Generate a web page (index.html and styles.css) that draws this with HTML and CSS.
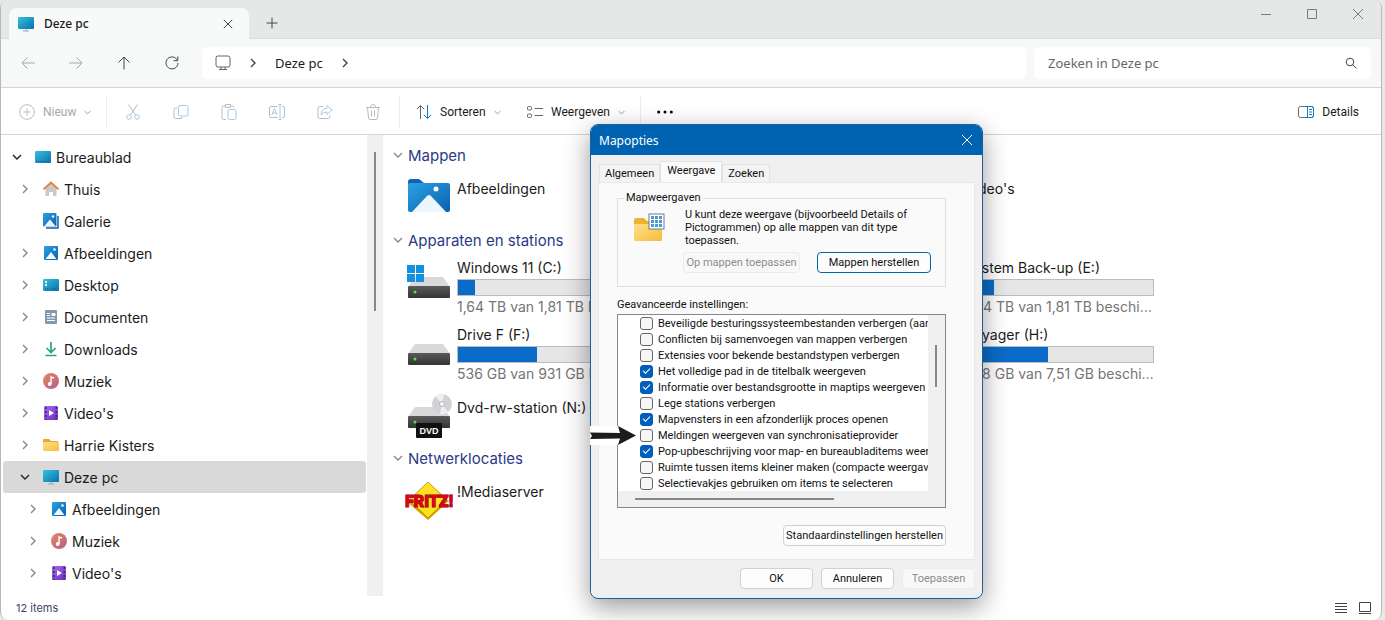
FILE: index.html
```html
<!DOCTYPE html>
<html lang="nl">
    <head>
        <meta charset="utf-8">
        <title>Deze pc</title>
        <meta name="viewport" content="width=device-width, initial-scale=1">
        <link rel="stylesheet" href="styles.css">
    </head>
    <body>
        <svg class="defs" aria-hidden="true">
            <defs>
                <linearGradient id="g-teal" x1="0" y1="0" x2="1" y2="1"><stop offset="0" stop-color="#35c3dc"/><stop offset="1" stop-color="#0a6fae"/></linearGradient>
                <linearGradient id="g-blue" x1="0" y1="0" x2="1" y2="1"><stop offset="0" stop-color="#2aa3e4"/><stop offset="1" stop-color="#0d5fae"/></linearGradient>
                <linearGradient id="g-pink" x1="0" y1="0" x2="1" y2="1"><stop offset="0" stop-color="#e88a5e"/><stop offset="1" stop-color="#b65a8a"/></linearGradient>
                <linearGradient id="g-purple" x1="0" y1="0" x2="1" y2="1"><stop offset="0" stop-color="#a56be8"/><stop offset="1" stop-color="#6c2fc0"/></linearGradient>
                <linearGradient id="g-yellow" x1="0" y1="0" x2="1" y2="1"><stop offset="0" stop-color="#ffe08a"/><stop offset="1" stop-color="#f5bd3c"/></linearGradient>
                <linearGradient id="g-drive" x1="0" y1="0" x2="0" y2="1"><stop offset="0" stop-color="#5a5a5a"/><stop offset="1" stop-color="#343434"/></linearGradient>
                <symbol id="chevron-right" viewBox="0 0 10 10"><path d="M3 1l4 4-4 4" fill="none" stroke="currentColor" stroke-width="1.4"/></symbol>
                <symbol id="chevron-down" viewBox="0 0 10 10"><path d="M1 3l4 4 4-4" fill="none" stroke="currentColor" stroke-width="1.4"/></symbol>
                <symbol id="close" viewBox="0 0 12 12"><path d="M1 1l10 10M11 1L1 11" fill="none" stroke="currentColor"/></symbol>
                <symbol id="pc" viewBox="0 0 16 16"><rect y="1" width="16" height="12" rx="1" fill="url(#g-teal)"/><path d="M8 13v2M5 15h6" stroke="#8fa9b8"/></symbol>
                <symbol id="desk" viewBox="0 0 16 16"><rect y="2" width="16" height="12" rx="1" fill="url(#g-teal)"/><path d="M1 12.500h14" stroke="#0b5f8f" stroke-dasharray="1 1"/></symbol>
                <symbol id="desktop" viewBox="0 0 16 16"><rect y="2" width="16" height="12" rx="1" fill="url(#g-teal)"/><path d="M2 4h2v2H2zM2 7h2v2H2z" fill="#d8f4fb"/><path d="M2 12h12" stroke="#0b5f8f" stroke-dasharray="1 1"/></symbol>
                <symbol id="home" viewBox="0 0 16 16"><path d="M2.500 7L8 2l5.500 5v8H10v-4H6v4H2.500z" fill="#c9c9c9"/><path d="M.5 8.300L8 1.500l7.500 6.800" fill="none" stroke="#e0853f" stroke-width="2"/></symbol>
                <symbol id="gallery" viewBox="0 0 16 16"><path d="M3 15h12V3" fill="none" stroke="#0d5fae" stroke-width="1.500"/><rect width="13.500" height="13.500" rx="1" fill="url(#g-blue)"/><path d="M1 13.500l6-7 6 7z" fill="#eaf6ff"/><circle cx="10" cy="3.500" r="1.200" fill="#fff"/></symbol>
                <symbol id="picture" viewBox="0 0 16 16"><rect x="1" y="1" width="14" height="14" rx="1" fill="url(#g-blue)"/><path d="M2.500 14l5.500-7 5.500 7z" fill="#eef8ff"/><circle cx="11.500" cy="4.500" r="1.200" fill="#fff"/></symbol>
                <symbol id="document" viewBox="0 0 16 16"><rect x="2" y="1" width="12" height="14" rx="1" fill="#8399b0"/><path d="M4 4.500h3M4 6.500h3M4 9h8M4 11.500h8M9 4.500h3v2H9z" stroke="#fff" fill="#fff"/></symbol>
                <symbol id="download" viewBox="0 0 16 16"><path d="M8 1v10M3.500 7L8 11.500 12.500 7M2.500 14.500h11" fill="none" stroke="#27a577" stroke-width="1.700"/></symbol>
                <symbol id="music" viewBox="0 0 16 16"><circle cx="8" cy="8" r="8" fill="url(#g-pink)"/><path d="M8 11V4l3 1" fill="none" stroke="#fff" stroke-width="1.400"/><circle cx="6.700" cy="11" r="1.900" fill="#fff"/></symbol>
                <symbol id="video" viewBox="0 0 16 16"><rect x="1" y="1" width="14" height="14" rx="1" fill="url(#g-purple)"/><path d="M6 5l5 3-5 3z" fill="#fff"/><path d="M2.800 2v13M13.200 2v13" stroke="#43208a" stroke-width="1.600" stroke-dasharray="2 2"/></symbol>
                <symbol id="folder" viewBox="0 0 16 16"><path d="M0 3q0-1 1-1h5l2 2h7v5H0z" fill="#e9a930"/><rect y="5" width="16" height="9" rx="1" fill="url(#g-yellow)"/></symbol>
                <symbol id="drive" viewBox="0 0 42 22"><path d="M7 0h28l7 10H0z" fill="#d9d9d9"/><rect y="9" width="42" height="12" rx="1" fill="url(#g-drive)"/><circle cx="7" cy="15" r="1.500" fill="#4fe04f"/></symbol>
            </defs>
        </svg>

        <div class="window">
            <header class="titlebar">
                <div class="tab">
                    <svg class="icon"><use href="#pc"/></svg>
                    <span class="tab-title">Deze pc</span>
                    <button class="tab-close" aria-label="Tabblad sluiten"><svg><use href="#close"/></svg></button>
                </div>
                <button class="new-tab" aria-label="Nieuw tabblad"><svg viewBox="0 0 12 12"><path d="M6 0.500v11M.5 6h11"/></svg></button>
                <div class="window-buttons">
                    <button aria-label="Minimaliseren"><svg viewBox="0 0 12 12"><path d="M1 6.500h10"/></svg></button>
                    <button aria-label="Maximaliseren"><svg viewBox="0 0 12 12"><path d="M1.500 1.500h9v9h-9z"/></svg></button>
                    <button aria-label="Sluiten"><svg viewBox="0 0 12 12"><path d="M1 1l10 10M11 1L1 11"/></svg></button>
                </div>
            </header>

            <nav class="navbar">
                <div class="nav-buttons">
                    <button aria-label="Terug" disabled><svg viewBox="0 0 16 16"><path d="M15 8H2M7.500 2.500L2 8l5.500 5.500"/></svg></button>
                    <button aria-label="Vooruit" disabled><svg viewBox="0 0 16 16"><path d="M1 8h13M8.500 2.500L14 8l-5.500 5.500"/></svg></button>
                    <button aria-label="Omhoog"><svg viewBox="0 0 16 16"><path d="M8 14.500V2M2.500 7.500L8 2l5.500 5.500"/></svg></button>
                    <button aria-label="Vernieuwen"><svg viewBox="0 0 16 16"><path d="M13.500 5.500a6 6 0 1 0 .5 2.500M13.800 1.500v4.200H9.600"/></svg></button>
                </div>
                <div class="address">
                    <svg class="icon line" viewBox="0 0 16 16"><rect x="1" y="1" width="14" height="11" rx="2"/><path d="M6 12v2.500M10 12v2.500M4 14.500h8"/></svg>
                    <svg class="chevron"><use href="#chevron-right"/></svg>
                    <a href="#">Deze pc</a>
                    <svg class="chevron"><use href="#chevron-right"/></svg>
                </div>
                <div class="search">
                    <input type="text" placeholder="Zoeken in Deze pc" aria-label="Zoeken in Deze pc">
                    <svg viewBox="0 0 12 12"><circle cx="5" cy="5" r="3.800"/><path d="M7.800 7.800L11.500 11.500"/></svg>
                </div>
            </nav>

            <div class="toolbar">
                <button class="tool new" disabled>
                    <svg class="icon line" viewBox="0 0 16 16"><circle cx="8" cy="8" r="7.300"/><path d="M8 4.500v7M4.500 8h7"/></svg>
                    Nieuw
                    <svg class="caret"><use href="#chevron-down"/></svg>
                </button>
                <div class="tool-group">
                    <button aria-label="Knippen" disabled><svg class="icon line" viewBox="0 0 16 16"><path d="M3.500 0.500l7 10.500M12.500 0.500l-7 10.500"/><g class="accent"><circle cx="4" cy="13" r="2.300"/><circle cx="12" cy="13" r="2.300"/></g></svg></button>
                    <button aria-label="Kopiëren" disabled><svg class="icon line" viewBox="0 0 16 16"><path d="M4 4H2.500Q1 4 1 5.500v7.500q0 1.500 1.500 1.500H8q1.500 0 1.500-1.500"/><rect class="accent" x="5.500" y="1.500" width="9.500" height="10.500" rx="1.500"/></svg></button>
                    <button aria-label="Plakken" disabled><svg class="icon line" viewBox="0 0 16 16"><path d="M5 15.500H2.500Q1 15.500 1 14V3.500Q1 2 2.500 2H4M10 2h1.500Q13 2 13 3.500M4.500.5h5v3h-5z"/><rect class="accent" x="7" y="5.500" width="8" height="10" rx="1.500"/></svg></button>
                    <button aria-label="Naam wijzigen" disabled><svg class="icon line" viewBox="0 0 16 16"><path d="M8.500 2.500H2Q.5 2.500.5 4v8q0 1.500 1.500 1.500h6.500M13 2.500h1Q15.500 2.500 15.500 4v8q0 1.500-1.500 1.500h-1"/><path class="accent" d="M2.800 11L5.500 4.500 8.200 11M3.700 9h3.600M11 .5v15M9.500.5h3M9.500 15.500h3"/></svg></button>
                    <button aria-label="Delen" disabled><svg class="icon line" viewBox="0 0 16 16"><path d="M6 2.500H2.500Q1 2.500 1 4v9q0 1.500 1.500 1.500h9Q13 14.500 13 13v-1.500"/><path class="accent" d="M10 1.500l5 4.500-5 4.500V8Q6 7.800 4 11q.5-6 6-7z"/></svg></button>
                    <button aria-label="Verwijderen" disabled><svg class="icon line" viewBox="0 0 16 16"><path d="M1 3.500h14M2.500 3.500l1 10.500q.2 1.500 1.500 1.500h6q1.300 0 1.500-1.500l1-10.500M5.500 3.500q0-3 2.500-3t2.500 3M6.500 6.500v6M9.500 6.500v6"/></svg></button>
                </div>
                <button class="tool sort">
                    <svg class="icon line" viewBox="0 0 16 16"><path d="M4.500 15V1.500M.8 5.200l3.700-3.700L8.200 5.200"/><path class="accent" d="M11.500 1v13.500M7.800 10.800l3.700 3.700 3.700-3.700"/></svg>
                    Sorteren
                    <svg class="caret"><use href="#chevron-down"/></svg>
                </button>
                <button class="tool view">
                    <svg class="icon line" viewBox="0 0 16 16"><rect x=".5" y="2.500" width="4" height="3.500" rx="1"/><rect x=".5" y="10" width="4" height="3.500" rx="1"/><path d="M7.500 4.500H16M7.500 11.500H16"/></svg>
                    Weergeven
                    <svg class="caret"><use href="#chevron-down"/></svg>
                </button>
                <button class="more" aria-label="Meer"><svg class="icon" viewBox="0 0 16 16"><circle cx="1.700" cy="8" r="1.500"/><circle cx="8" cy="8" r="1.500"/><circle cx="14.300" cy="8" r="1.500"/></svg></button>
                <button class="tool details">
                    <svg class="icon line" viewBox="0 0 16 16"><rect x=".5" y="2.500" width="15" height="11" rx="2"/><path class="accent" d="M9.500 2.500H13.500Q15.500 2.500 15.500 4.500v7q0 2-2 2h-4zM11 5.500h3M11 8h3M11 10.500h3"/></svg>
                    Details
                </button>
            </div>

            <div class="main">
                <aside class="sidebar">
                    <ul class="tree">
                        <li><a href="#" class="open"><svg class="chevron"><use href="#chevron-down"/></svg><svg class="icon"><use href="#desk"/></svg>Bureaublad</a></li>
                        <li><a href="#" class="level-1"><svg class="chevron"><use href="#chevron-right"/></svg><svg class="icon"><use href="#home"/></svg>Thuis</a></li>
                        <li><a href="#" class="level-1"><svg class="chevron"></svg><svg class="icon"><use href="#gallery"/></svg>Galerie</a></li>
                        <li><a href="#" class="level-1"><svg class="chevron"><use href="#chevron-right"/></svg><svg class="icon"><use href="#picture"/></svg>Afbeeldingen</a></li>
                        <li><a href="#" class="level-1"><svg class="chevron"><use href="#chevron-right"/></svg><svg class="icon"><use href="#desktop"/></svg>Desktop</a></li>
                        <li><a href="#" class="level-1"><svg class="chevron"><use href="#chevron-right"/></svg><svg class="icon"><use href="#document"/></svg>Documenten</a></li>
                        <li><a href="#" class="level-1"><svg class="chevron"><use href="#chevron-right"/></svg><svg class="icon"><use href="#download"/></svg>Downloads</a></li>
                        <li><a href="#" class="level-1"><svg class="chevron"><use href="#chevron-right"/></svg><svg class="icon"><use href="#music"/></svg>Muziek</a></li>
                        <li><a href="#" class="level-1"><svg class="chevron"><use href="#chevron-right"/></svg><svg class="icon"><use href="#video"/></svg>Video's</a></li>
                        <li><a href="#" class="level-1"><svg class="chevron"><use href="#chevron-right"/></svg><svg class="icon"><use href="#folder"/></svg>Harrie Kisters</a></li>
                        <li><a href="#" class="level-1 open selected"><svg class="chevron"><use href="#chevron-down"/></svg><svg class="icon"><use href="#pc"/></svg>Deze pc</a></li>
                        <li><a href="#" class="level-2"><svg class="chevron"><use href="#chevron-right"/></svg><svg class="icon"><use href="#picture"/></svg>Afbeeldingen</a></li>
                        <li><a href="#" class="level-2"><svg class="chevron"><use href="#chevron-right"/></svg><svg class="icon"><use href="#music"/></svg>Muziek</a></li>
                        <li><a href="#" class="level-2"><svg class="chevron"><use href="#chevron-right"/></svg><svg class="icon"><use href="#video"/></svg>Video's</a></li>
                    </ul>
                    <div class="scrollbar"><div class="thumb"></div></div>
                </aside>

                <section class="content">
                    <h2><svg class="chevron"><use href="#chevron-down"/></svg>Mappen</h2>
                    <div class="items">
                        <a href="#" class="item plain">
                            <svg class="item-icon" viewBox="0 0 48 44">
                                <path d="M3 12q0-3 3-3h8l5 4h23v10H3z" fill="#0f66ae"/>
                                <rect x="3" y="13" width="42" height="29" rx="2" fill="url(#g-blue)"/>
                                <path d="M7 42l15-16q2-2 4 0l15 16z" fill="#eef6fd"/>
                                <circle cx="31" cy="19" r="2.500" fill="#fff"/>
                            </svg>
                            <span class="item-text">Afbeeldingen</span>
                        </a>
                        <a href="#" class="item plain last">
                            <svg class="item-icon" viewBox="0 0 48 44"><rect x="3" y="13" width="42" height="29" rx="2" fill="url(#g-purple)"/></svg>
                            <span class="item-text">Video's</span>
                        </a>
                    </div>

                    <h2><svg class="chevron"><use href="#chevron-down"/></svg>Apparaten en stations</h2>
                    <div class="items drives">
                        <a href="#" class="item">
                            <svg class="item-icon" viewBox="0 0 48 44">
                                <use href="#drive" x="3" y="22" width="42" height="22"/>
                                <path d="M2 10h8v8H2zM11 10h8v8h-8zM2 19h8v8H2zM11 19h8v8h-8z" fill="#1191e0"/>
                            </svg>
                            <span class="item-text">Windows 11 (C:)
                                <progress max="100" value="9"></progress>
                                <small>1,64 TB van 1,81 TB beschikbaar</small>
                            </span>
                        </a>
                        <a href="#" class="item last">
                            <svg class="item-icon" viewBox="0 0 48 44"><use href="#drive" x="3" y="22" width="42" height="22"/></svg>
                            <span class="item-text">System Back-up (E:)
                                <progress max="100" value="15"></progress>
                                <small>1,54 TB van 1,81 TB beschikbaar</small>
                            </span>
                        </a>
                        <a href="#" class="item">
                            <svg class="item-icon" viewBox="0 0 48 44"><use href="#drive" x="3" y="22" width="42" height="22"/></svg>
                            <span class="item-text">Drive F (F:)
                                <progress max="100" value="42"></progress>
                                <small>536 GB van 931 GB beschikbaar</small>
                            </span>
                        </a>
                        <a href="#" class="item last">
                            <svg class="item-icon" viewBox="0 0 48 44"><use href="#drive" x="3" y="22" width="42" height="22"/></svg>
                            <span class="item-text">Voyager (H:)
                                <progress max="100" value="44"></progress>
                                <small>4,18 GB van 7,51 GB beschikbaar</small>
                            </span>
                        </a>
                        <a href="#" class="item plain">
                            <svg class="item-icon tall" viewBox="0 0 48 48">
                                <use href="#drive" x="3" y="15" width="42" height="22"/>
                                <circle cx="37" cy="12" r="10" fill="#d2d2d6"/>
                                <path d="M37 12L31 4.500a10 10 0 0 1 8-2zM37 12l6 8a10 10 0 0 1-8 2z" fill="#f0f0f4"/>
                                <circle cx="37" cy="12" r="2.500" fill="#f8f8f8" stroke="#b4b4b8"/>
                                <rect x="11" y="31" width="26" height="15" rx="1" fill="#111"/>
                                <text x="24" y="42" class="dvd">DVD</text>
                            </svg>
                            <span class="item-text">Dvd-rw-station (N:)</span>
                        </a>
                    </div>

                    <h2><svg class="chevron"><use href="#chevron-down"/></svg>Netwerklocaties</h2>
                    <div class="items">
                        <a href="#" class="item plain">
                            <svg class="item-icon tall" viewBox="0 0 48 48">
                                <path d="M23 7l21 18-21 19L2 26z" fill="#d9a900"/>
                                <path d="M23 6l19 18-19 18L4 24z" fill="#ffe11e" stroke="#7a4a00" stroke-width=".5"/>
                                <text x="24" y="31" class="fritz">FRITZ!</text>
                            </svg>
                            <span class="item-text">!Mediaserver</span>
                        </a>
                    </div>
                </section>

                <form class="dialog">
                    <div class="dialog-title">
                        Mapopties
                        <button type="button" aria-label="Sluiten"><svg><use href="#close"/></svg></button>
                    </div>
                    <div class="dialog-body">
                        <div class="tabs">
                            <button type="button">Algemeen</button>
                            <button type="button" class="active">Weergave</button>
                            <button type="button">Zoeken</button>
                        </div>
                        <div class="page">
                            <fieldset>
                                <legend>Mapweergaven</legend>
                                <svg class="folder-icon" viewBox="0 0 32 32">
                                    <path d="M1 8q0-2 2-2h8l3 3h15v8H1z" fill="#f0b030"/>
                                    <rect x="1" y="12" width="28" height="17" rx="1" fill="url(#g-yellow)"/>
                                    <rect x="16" y="2" width="15" height="15" fill="#fff" stroke="#6a7a94"/>
                                    <path d="M18 4h3v3h-3zM22 4h3v3h-3zM26 4h3v3h-3zM18 8h3v3h-3zM22 8h3v3h-3zM26 8h3v3h-3zM18 12h3v3h-3zM22 12h3v3h-3zM26 12h3v3h-3z" fill="#4a9ad4"/>
                                </svg>
                                <div class="folder-views">
                                    <p>U kunt deze weergave (bijvoorbeeld Details of Pictogrammen) op alle mappen van dit type toepassen.</p>
                                    <div class="folder-buttons">
                                        <button type="button" disabled>Op mappen toepassen</button>
                                        <button type="button" class="focus">Mappen herstellen</button>
                                    </div>
                                </div>
                            </fieldset>

                            <div class="list-label">Geavanceerde instellingen:</div>
                            <div class="list">
                                <div class="options">
                                    <label><input type="checkbox"><span>Beveiligde besturingssysteembestanden verbergen (aanbevolen)</span></label>
                                    <label><input type="checkbox"><span>Conflicten bij samenvoegen van mappen verbergen</span></label>
                                    <label><input type="checkbox"><span>Extensies voor bekende bestandstypen verbergen</span></label>
                                    <label><input type="checkbox" checked><span>Het volledige pad in de titelbalk weergeven</span></label>
                                    <label><input type="checkbox" checked><span>Informatie over bestandsgrootte in maptips weergeven</span></label>
                                    <label><input type="checkbox"><span>Lege stations verbergen</span></label>
                                    <label><input type="checkbox" checked><span>Mapvensters in een afzonderlijk proces openen</span></label>
                                    <label><input type="checkbox"><span>Meldingen weergeven van synchronisatieprovider</span></label>
                                    <label><input type="checkbox" checked><span>Pop-upbeschrijving voor map- en bureaubladitems weergeven</span></label>
                                    <label><input type="checkbox"><span>Ruimte tussen items kleiner maken (compacte weergave)</span></label>
                                    <label><input type="checkbox"><span>Selectievakjes gebruiken om items te selecteren</span></label>
                                </div>
                                <div class="vscroll"></div>
                                <div class="hscroll"></div>
                            </div>
                            <button type="button" class="reset">Standaardinstellingen herstellen</button>
                        </div>
                        <div class="dialog-buttons">
                            <button type="submit">OK</button>
                            <button type="button">Annuleren</button>
                            <button type="button" disabled>Toepassen</button>
                        </div>
                    </div>
                    <svg class="pointer" viewBox="0 0 46 19"><path d="M0 0h46v19H0z" fill="#fff"/><path d="M0 6.500l30 .5-2-7 18 9.500L28 19l2-6.500-30 .5 2-3z" fill="#1c1c1c"/></svg>
                </form>
            </div>

            <footer class="statusbar">
                <span>12 items</span>
                <div class="status-buttons">
                    <button aria-label="Details"><svg viewBox="0 0 12 12"><path d="M0 1.500h12M0 4.500h12M0 7.500h12M0 10.500h12"/></svg></button>
                    <button aria-label="Grote pictogrammen"><svg viewBox="0 0 12 12"><path d="M.5.500h11v9H.5zM0 11.500h12"/></svg></button>
                </div>
            </footer>
        </div>
    </body>
</html>
```

FILE: styles.css
```css
* {
    box-sizing: border-box;
}

body {
    margin: 0;
    background: #e8e8e8;
    font-family: "Noto Sans", "Open Sans", sans-serif;
    font-size: 12px;
    color: #1b1b1b;
}

button {
    border: 0;
    padding: 0;
    background: none;
    font: inherit;
    color: inherit;
    display: flex;
    align-items: center;
    justify-content: center;
}

a {
    color: inherit;
    text-decoration: none;
}

svg {
    flex: none;
}

.defs {
    position: absolute;
    width: 0;
    height: 0;
}

.icon {
    width: 16px;
    height: 16px;
}

.chevron {
    width: 10px;
    height: 10px;
}

.line {
    fill: none;
    stroke: #666;
}

.window {
    display: flex;
    flex-direction: column;
    min-height: 100vh;
    margin-right: 3px;
    border: solid #b8b8b8;
    border-width: 0 1px;
    border-radius: 8px;
    background: #fff;
    overflow: hidden;
}

/* Title bar */
.titlebar {
    display: flex;
    height: 39px;
    padding-left: 8px;
    background: #e6e8e8;
    border-bottom: 1px solid #dcdede;
}

.tab {
    display: flex;
    align-items: center;
    width: 240px;
    height: 31px;
    margin-top: 8px;
    padding: 0 16px 0 9px;
    gap: 10px;
    border-radius: 8px 8px 0 0;
    background: #f8f9f9;
}

.tab-title {
    flex: 1;
    font-weight: 500;
}

.tab-close svg {
    width: 10px;
    height: 10px;
}

.new-tab {
    width: 46px;
    margin-top: 8px;
}

.new-tab svg,
.window-buttons svg {
    width: 12px;
    height: 12px;
    fill: none;
    stroke: #444;
}

.window-buttons {
    display: flex;
    height: 28px;
    margin-left: auto;
}

.window-buttons button {
    width: 46px;
}

.window-buttons svg {
    stroke: #7c7c7c;
}

/* Navigation */
.navbar {
    display: flex;
    align-items: center;
    height: 49px;
    padding: 0 10px 0 3px;
    background: #f7f8f8;
    border-bottom: 1px solid #d4d4d4;
}

.nav-buttons {
    display: flex;
    margin-right: 6px;
}

.nav-buttons button {
    width: 48px;
    height: 32px;
}

.nav-buttons svg {
    width: 16px;
    height: 16px;
    fill: none;
    stroke: #444;
}

.nav-buttons button:disabled svg {
    stroke: #aaa;
}

.address,
.search {
    display: flex;
    align-items: center;
    height: 32px;
    border-radius: 5px;
    background: #fff;
    font-size: 13px;
}

.address {
    flex: 1;
    gap: 17px;
    padding-left: 13px;
    margin-right: 8px;
}

.address .chevron {
    color: #444;
}

.search {
    width: 337px;
    padding: 0 14px;
}

.search input {
    flex: 1;
    min-width: 0;
    border: 0;
    padding: 0;
    background: none;
    font: inherit;
    outline: none;
}

.search input::placeholder {
    color: #666;
    opacity: 1;
}

.search svg {
    width: 12px;
    height: 12px;
    fill: none;
    stroke: #444;
}

/* Toolbar */
.toolbar {
    display: flex;
    align-items: center;
    height: 47px;
    padding: 2px 22px 0 18px;
    border-bottom: 1px solid #d4d4d4;
    font-family: Roboto, "Noto Sans", sans-serif;
}

.tool {
    gap: 8px;
}

.toolbar button:disabled {
    color: #a8a8a8;
}

.tool-group {
    display: flex;
    padding: 0 2px;
    border: solid #eee;
    border-width: 0 1px;
}

.tool-group button {
    width: 48px;
    height: 34px;
}

button:disabled .line {
    stroke: #bbb;
}

.new {
    width: 87px;
    justify-content: flex-start;
}

.sort {
    width: 111px;
    padding-left: 16px;
    justify-content: flex-start;
}

.view {
    width: 130px;
    padding-left: 16px;
    height: 34px;
    justify-content: flex-start;
    border-right: 1px solid #eee;
}

.more {
    width: 48px;
}

.details {
    margin-left: auto;
}

.caret {
    width: 7px;
    height: 7px;
    color: #999;
}

.accent {
    stroke: #1279c4;
}

button:disabled .accent {
    stroke: #a9c8e6;
}

/* Body */
.main {
    position: relative;
    display: flex;
    flex: 1;
    font-family: Inter, "Liberation Sans", sans-serif;
    font-size: 14px;
}

.sidebar {
    display: flex;
    width: 382px;
}

.tree {
    flex: 1;
    margin: 0;
    padding: 6px 1px 0 2px;
    list-style: none;
}

.tree a {
    display: flex;
    align-items: center;
    height: 32px;
    padding-left: 9px;
    border-radius: 3px;
}

.tree .level-1 {
    padding-left: 17px;
}

.tree .level-2 {
    padding-left: 25px;
}

.tree .chevron {
    margin-right: 13px;
    color: #888;
}

.tree .open .chevron {
    color: #222;
}

.tree .icon {
    margin-right: 5px;
}

.tree .selected {
    background: #d9d9d9;
}

.scrollbar {
    width: 16px;
    padding: 17px 7px;
    background: #f0f0f0;
}

.thumb {
    width: 2px;
    height: 159px;
    background: #888;
}

.content {
    flex: 1;
    padding: 5px 0 0 10px;
}

.content h2 {
    display: flex;
    align-items: center;
    height: 30px;
    margin: 0;
    gap: 5px;
    font-size: 15px;
    font-weight: 400;
    color: #2b3a86;
}

.content h2 .chevron {
    color: #888;
}

.items {
    display: grid;
    grid-template-columns: repeat(3, 254px);
    grid-auto-rows: minmax(55px, auto);
    padding-left: 12px;
}

.drives {
    grid-auto-rows: minmax(54px, auto);
}

.item {
    display: flex;
    gap: 4px;
    height: 67px;
}

.item.plain {
    height: 54px;
}

.item.last {
    grid-column: 3;
}

.item-icon {
    width: 48px;
    height: 44px;
}

.item-icon.tall {
    height: 48px;
    margin-top: 3px;
}

.item-text {
    width: 189px;
    padding-top: 4px;
    line-height: 18px;
}

.plain .item-text {
    padding-top: 10px;
}

.item progress {
    display: block;
    appearance: none;
    width: 189px;
    height: 17px;
    margin-top: 2px;
    border: 1px solid #bcbcbc;
    background: #e6e6e6;
}

.item progress::-webkit-progress-bar {
    background: #e6e6e6;
}

.item progress::-webkit-progress-value {
    background: #0a6cc8;
}

.item small {
    display: block;
    margin-top: 2px;
    font-size: 14px;
    color: #757575;
    overflow: hidden;
    white-space: nowrap;
    text-overflow: ellipsis;
}

.dvd {
    font: bold 9px "Liberation Sans", sans-serif;
    fill: #fff;
    text-anchor: middle;
}

.fritz {
    font: 900 16px Roboto, "Liberation Sans", sans-serif;
    fill: #e2001a;
    stroke: #7a0010;
    stroke-width: 1px;
    paint-order: stroke;
    text-anchor: middle;
}

/* Folder options dialog */
.dialog {
    position: absolute;
    top: -11px;
    left: 589px;
    width: 393px;
    border: 1px solid #1c5f9c;
    border-radius: 8px;
    background: #e9f1f8;
    box-shadow: 0 8px 26px rgba(0, 0, 0, 0.4);
    font-family: Roboto, "Liberation Sans", sans-serif;
    font-size: 11px;
    color: #111;
}

.dialog-title {
    display: flex;
    align-items: center;
    justify-content: space-between;
    height: 30px;
    padding: 0 9px 0 8px;
    border-radius: 7px 7px 0 0;
    background: #0063b1;
    font-family: "Noto Sans", "Open Sans", sans-serif;
    font-size: 12px;
    color: #fff;
}

.dialog-title svg {
    width: 12px;
    height: 12px;
}

.dialog-body {
    margin-bottom: 5px;
    padding: 6px 7px 4px;
    background: #f0f0f0;
}

.dialog-body button {
    height: 21px;
    border: 1px solid #d0d0d0;
    border-radius: 4px;
    background: #fdfdfd;
}

.dialog-body button:disabled {
    border-color: #ececec;
    background: #f8f8f8;
    color: #8c8c8c;
}

.dialog-body .tabs {
    display: flex;
    align-items: flex-end;
    height: 21px;
    padding-left: 1px;
}

.tabs button {
    height: 18px;
    padding: 0 5px;
    border-color: #e2e2e2;
    border-bottom: 0;
    border-radius: 0;
    background: #f3f3f3;
}

.dialog-body .tabs .active {
    height: 21px;
    padding: 0 6px 3px;
    border-bottom: 0;
    background: #fafafa;
}

.page {
    padding: 8px 28px 13px 18px;
    border: 1px solid #e8e8e8;
    background: #fafafa;
}

fieldset {
    display: flex;
    height: 96px;
    margin: 0;
    padding: 3px 14px 0 15px;
    border: 1px solid #dedede;
}

legend {
    margin-left: -9px;
    padding: 0 2px;
    line-height: 14px;
}

.folder-icon {
    width: 32px;
    height: 32px;
    margin: 4px 20px 0 0;
}

.folder-views {
    flex: 1;
}

.folder-views p {
    margin: 0 0 5px;
    line-height: 13px;
}

.folder-buttons {
    display: flex;
    justify-content: space-between;
    margin-left: -2px;
}

.folder-buttons button {
    width: 117px;
}

.folder-buttons .focus {
    width: 114px;
    border-color: #0067a8;
}

.list-label {
    margin: 11px 0 2px;
    line-height: 14px;
}

.list {
    display: grid;
    grid-template-columns: 1fr 17px;
    grid-template-rows: auto 16px;
    border: 1px solid #828790;
    background: #f0f0f0;
}

.options {
    padding-left: 22px;
    background: #fff;
    overflow: hidden;
}

.options label {
    display: flex;
    align-items: center;
    gap: 5px;
    height: 16px;
    white-space: nowrap;
}

.options input {
    appearance: none;
    flex: none;
    display: grid;
    place-items: center;
    width: 13px;
    height: 13px;
    margin: 0;
    border: 1px solid #6e6468;
    border-radius: 3px;
    background: #f6f6f6;
}

.options input:checked {
    border-color: #005fb8;
    background: #005fb8;
}

.options input:checked::after {
    content: "";
    width: 6px;
    height: 3px;
    margin-bottom: 2px;
    border: solid #fff;
    border-width: 0 0 1px 1px;
    transform: rotate(-45deg);
}

.vscroll {
    width: 2px;
    height: 42px;
    margin: 30px 0 0 7px;
    background: #868686;
}

.hscroll {
    width: 199px;
    height: 2px;
    margin: 7px 0 0 17px;
    background: #868686;
}

.page .reset {
    margin: 17px 0 0 auto;
    width: 163px;
}

.dialog-buttons {
    display: flex;
    justify-content: flex-end;
    gap: 8px;
    margin-top: 8px;
}

.dialog-buttons button {
    width: 73px;
}

.pointer {
    position: absolute;
    top: 301px;
    left: -1px;
    width: 46px;
    height: 19px;
}

/* Status bar */
.statusbar {
    display: flex;
    align-items: center;
    justify-content: space-between;
    height: 24px;
    padding: 0 10px 0 15px;
    font-family: Inter, "Liberation Sans", sans-serif;
    font-size: 11px;
    color: #3a4468;
}

.status-buttons {
    display: flex;
    gap: 12px;
}

.status-buttons svg {
    width: 12px;
    height: 12px;
    fill: none;
    stroke: #444;
}
```
